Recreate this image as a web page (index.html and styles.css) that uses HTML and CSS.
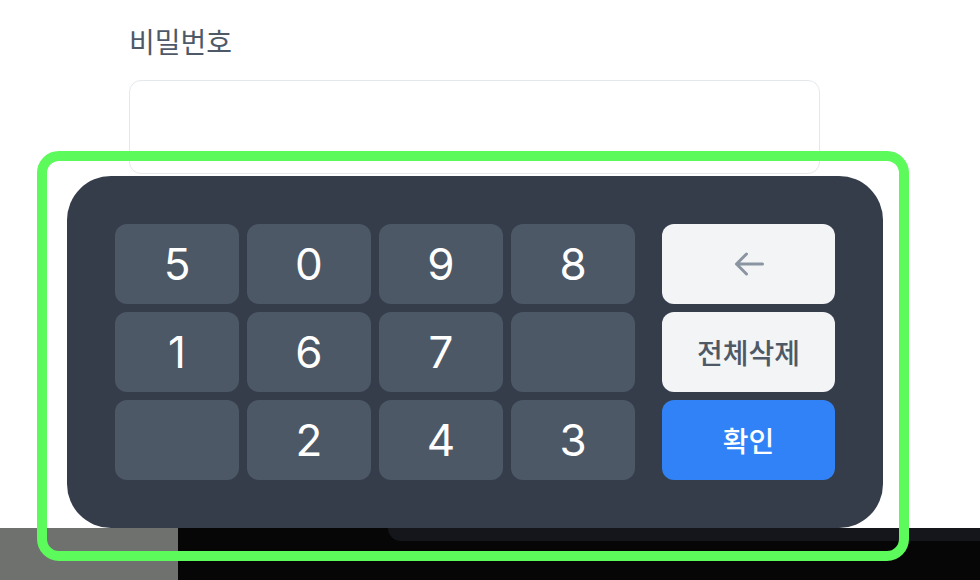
FILE: index.html
```html
<!DOCTYPE html>
<html lang="ko">

<head>
    <meta charset="utf-8">
    <title>비밀번호 입력</title>
    <link rel="stylesheet" href="styles.css">
</head>

<body>
    <div class="field">
        <div class="field-label">비밀번호</div>
        <div class="field-input"></div>
    </div>

    <div class="keypad">
        <div class="digits">
            <button class="key">5</button>
            <button class="key">0</button>
            <button class="key">9</button>
            <button class="key">8</button>
            <button class="key">1</button>
            <button class="key">6</button>
            <button class="key">7</button>
            <button class="key"></button>
            <button class="key"></button>
            <button class="key">2</button>
            <button class="key">4</button>
            <button class="key">3</button>
        </div>
        <div class="actions">
            <button class="action light" aria-label="지우기">
                <svg width="30" height="24" viewBox="0 0 30 24">
                    <path d="M28.5 12H2.5M12.5 2L2.5 12L12.5 22" fill="none" stroke="#8b95a1" stroke-width="3" stroke-linecap="round" stroke-linejoin="round" />
                </svg>
            </button>
            <button class="action light">전체삭제</button>
            <button class="action primary">확인</button>
        </div>
    </div>

    <div class="bottom-bar">
        <div class="bar-thumb"></div>
        <div class="bar-dark">
            <div class="bar-strip"></div>
        </div>
    </div>

    <!-- 강조 표시 -->
    <div class="highlight"></div>
</body>

</html>
```

FILE: styles.css
```css
body {
    margin: 0;
    padding: 0;
    background: #fff;
    font-family: Inter, "Noto Sans CJK KR", sans-serif;
    width: 980px;
    height: 580px;
    overflow: hidden;
    position: relative;
}

.field {
    margin-left: 129px;
    width: 691px;
}

.field-label {
    margin-top: 23px;
    height: 36px;
    line-height: 36px;
    font-family: "Noto Sans CJK KR", sans-serif;
    font-size: 28px;
    color: #4e5968;
}

.field-input {
    margin-top: 21px;
    height: 94px;
    box-sizing: border-box;
    border: 1px solid #e5e8eb;
    border-radius: 12px;
    background: #fff;
}

.keypad {
    margin-top: 2px;
    margin-left: 67px;
    width: 816px;
    box-sizing: border-box;
    padding: 48px;
    display: flex;
    gap: 27px;
    background: #353d4b;
    border-radius: 44px;
}

.digits {
    display: grid;
    grid-template-columns: repeat(4, 124px);
    grid-auto-rows: 80px;
    gap: 8px;
}

.actions {
    display: grid;
    grid-template-columns: 173px;
    grid-auto-rows: 80px;
    gap: 8px;
}

.key,
.action {
    border: none;
    border-radius: 12px;
    padding: 0;
    margin: 0;
    display: flex;
    align-items: center;
    justify-content: center;
    font-family: Inter, "Noto Sans CJK KR", sans-serif;
}

.key {
    background: #4d5866;
    color: #fff;
    font-size: 44px;
    font-weight: 400;
}

.action {
    font-family: "Noto Sans CJK KR", sans-serif;
    font-size: 28px;
    font-weight: 500;
}

.action.light {
    background: #f2f4f6;
    color: #4e5968;
}

.action.primary {
    background: #3182f6;
    color: #fff;
}

.bottom-bar {
    height: 52px;
    display: flex;
    background: #060606;
}

.bar-thumb {
    width: 178px;
    background: #6f716f;
}

.bar-dark {
    flex: 1;
    padding-left: 210px;
}

.bar-strip {
    height: 13px;
    background: #14161c;
    border-bottom-left-radius: 14px;
}

.highlight {
    position: absolute;
    left: 37px;
    top: 151px;
    width: 872px;
    height: 410px;
    box-sizing: border-box;
    border: 10px solid #5cfa5a;
    border-radius: 22px;
    pointer-events: none;
}
```
